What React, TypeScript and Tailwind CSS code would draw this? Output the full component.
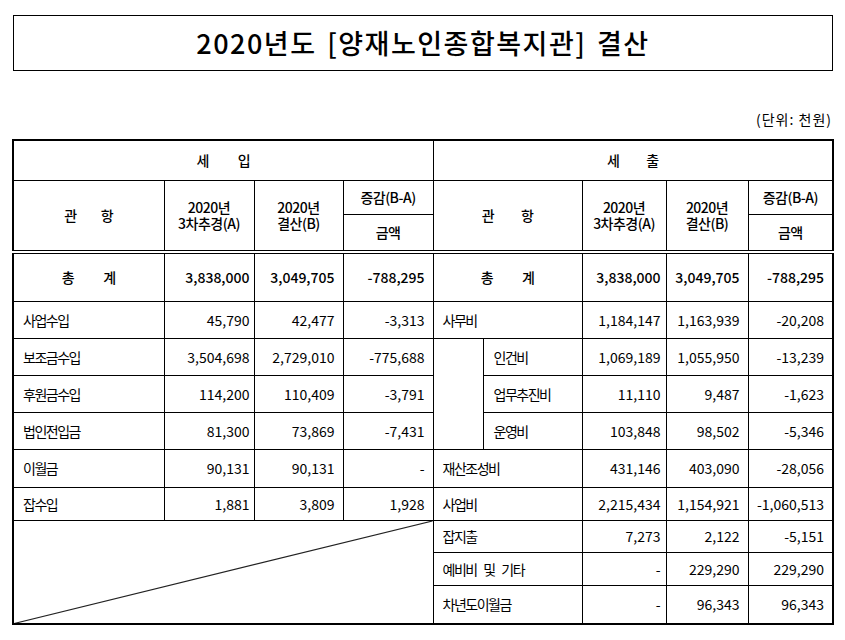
import React from "react";

const F = { fontFamily: '"Noto Sans CJK KR", "Noto Sans", sans-serif' };

const B = "border border-black p-0";
const lbl = "border border-black p-0 pl-[9px] text-left tracking-[-1.5px] [word-spacing:5px]";
const lblSub = "border border-black p-0 pl-[10px] text-left tracking-[-1.5px]";
const n1 = "border border-black p-0 pr-[4px] text-right";
const n2 = "border border-black p-0 pr-[8px] text-right";
const r1 = "border border-black p-0 pr-[5px] text-right";
const hd = "border border-black p-0 text-center font-medium tracking-[-0.5px] leading-[16px]";

function Spread({ a, b, gap }: { a: string; b: string; gap: string }) {
  return (
    <span className={"inline-flex justify-center " + gap}>
      <span>{a}</span>
      <span>{b}</span>
    </span>
  );
}

export default function App() {
  return (
    <div className="bg-white w-[845px] h-[640px] pl-[12px] pt-[15px] text-black" style={F}>
      <div className="ml-[1px] w-[820px] h-[56px] border border-black flex items-center justify-center text-[27px] font-medium tracking-[1.5px] [word-spacing:3px]">
        2020년도 [양재노인종합복지관] 결산
      </div>
      <div className="w-[820px] mt-[38px] h-[30px] text-right text-[14px] tracking-[1px] leading-[20px]">
        (단위: 천원)
      </div>
      <table className="w-[820px] table-fixed border-collapse border-2 border-black text-[14px] leading-[16px]">
        <colgroup>
          <col className="w-[151px]" />
          <col className="w-[90px]" />
          <col className="w-[89px]" />
          <col className="w-[90px]" />
          <col className="w-[50px]" />
          <col className="w-[99px]" />
          <col className="w-[84px]" />
          <col className="w-[82px]" />
          <col className="w-[85px]" />
        </colgroup>
        <tbody>
          <tr className="h-[40px]">
            <td colSpan={4} className={hd}>
              <Spread a="세" b="입" gap="gap-[29px]" />
            </td>
            <td colSpan={5} className={hd}>
              <Spread a="세" b="출" gap="gap-[27px]" />
            </td>
          </tr>
          <tr className="h-[34px]">
            <td rowSpan={2} className={hd}>
              <Spread a="관" b="항" gap="gap-[24px]" />
            </td>
            <td rowSpan={2} className={hd}>
              2020년
              <br />
              3차추경(A)
            </td>
            <td rowSpan={2} className={hd}>
              2020년
              <br />
              결산(B)
            </td>
            <td className={hd}>증감(B-A)</td>
            <td rowSpan={2} colSpan={2} className={hd}>
              <Spread a="관" b="항" gap="gap-[27px]" />
            </td>
            <td rowSpan={2} className={hd}>
              2020년
              <br />
              3차추경(A)
            </td>
            <td rowSpan={2} className={hd}>
              2020년
              <br />
              결산(B)
            </td>
            <td className={hd}>증감(B-A)</td>
          </tr>
          <tr className="h-[38px]">
            <td className={hd}>금액</td>
            <td className={hd}>금액</td>
          </tr>
          <tr className="h-[49px] font-medium [&>td]:border-t-4 [&>td]:border-double">
            <td className={hd}>
              <Spread a="총" b="계" gap="gap-[29px]" />
            </td>
            <td className={n1}>3,838,000</td>
            <td className={n2}>3,049,705</td>
            <td className={n2}>-788,295</td>
            <td colSpan={2} className={hd}>
              <Spread a="총" b="계" gap="gap-[29px]" />
            </td>
            <td className={r1}>3,838,000</td>
            <td className={n2}>3,049,705</td>
            <td className={n2}>-788,295</td>
          </tr>
          <tr className="h-[37px]">
            <td className={lbl}>사업수입</td>
            <td className={n1}>45,790</td>
            <td className={n2}>42,477</td>
            <td className={n2}>-3,313</td>
            <td colSpan={2} className={lbl}>사무비</td>
            <td className={r1}>1,184,147</td>
            <td className={n2}>1,163,939</td>
            <td className={n2}>-20,208</td>
          </tr>
          <tr className="h-[37px]">
            <td className={lbl}>보조금수입</td>
            <td className={n1}>3,504,698</td>
            <td className={n2}>2,729,010</td>
            <td className={n2}>-775,688</td>
            <td rowSpan={3} className={B}></td>
            <td className={lblSub}>인건비</td>
            <td className={r1}>1,069,189</td>
            <td className={n2}>1,055,950</td>
            <td className={n2}>-13,239</td>
          </tr>
          <tr className="h-[37px]">
            <td className={lbl}>후원금수입</td>
            <td className={n1}>114,200</td>
            <td className={n2}>110,409</td>
            <td className={n2}>-3,791</td>
            <td className={lblSub}>업무추진비</td>
            <td className={r1}>11,110</td>
            <td className={n2}>9,487</td>
            <td className={n2}>-1,623</td>
          </tr>
          <tr className="h-[37px]">
            <td className={lbl}>법인전입금</td>
            <td className={n1}>81,300</td>
            <td className={n2}>73,869</td>
            <td className={n2}>-7,431</td>
            <td className={lblSub}>운영비</td>
            <td className={r1}>103,848</td>
            <td className={n2}>98,502</td>
            <td className={n2}>-5,346</td>
          </tr>
          <tr className="h-[38px]">
            <td className={lbl}>이월금</td>
            <td className={n1}>90,131</td>
            <td className={n2}>90,131</td>
            <td className={n2}>-</td>
            <td colSpan={2} className={lbl}>재산조성비</td>
            <td className={r1}>431,146</td>
            <td className={n2}>403,090</td>
            <td className={n2}>-28,056</td>
          </tr>
          <tr className="h-[33px]">
            <td className={lbl}>잡수입</td>
            <td className={n1}>1,881</td>
            <td className={n2}>3,809</td>
            <td className={n2}>1,928</td>
            <td colSpan={2} className={lbl}>사업비</td>
            <td className={r1}>2,215,434</td>
            <td className={n2}>1,154,921</td>
            <td className={n2}>-1,060,513</td>
          </tr>
          <tr className="h-[32px]">
            <td colSpan={4} rowSpan={3} className={B + " relative"}>
              <svg
                className="absolute inset-0 w-full h-full"
                viewBox="0 0 100 100"
                preserveAspectRatio="none"
              >
                <line
                  x1="0"
                  y1="100"
                  x2="100"
                  y2="0"
                  stroke="#222"
                  strokeWidth="1.2"
                  vectorEffect="non-scaling-stroke"
                />
              </svg>
            </td>
            <td colSpan={2} className={lbl}>잡지출</td>
            <td className={r1}>7,273</td>
            <td className={n2}>2,122</td>
            <td className={n2}>-5,151</td>
          </tr>
          <tr className="h-[33px]">
            <td colSpan={2} className={lbl}>예비비 및 기타</td>
            <td className={r1}>-</td>
            <td className={n2}>229,290</td>
            <td className={n2}>229,290</td>
          </tr>
          <tr className="h-[39px]">
            <td colSpan={2} className={lbl}>차년도이월금</td>
            <td className={r1}>-</td>
            <td className={n2}>96,343</td>
            <td className={n2}>96,343</td>
          </tr>
        </tbody>
      </table>
    </div>
  );
}
